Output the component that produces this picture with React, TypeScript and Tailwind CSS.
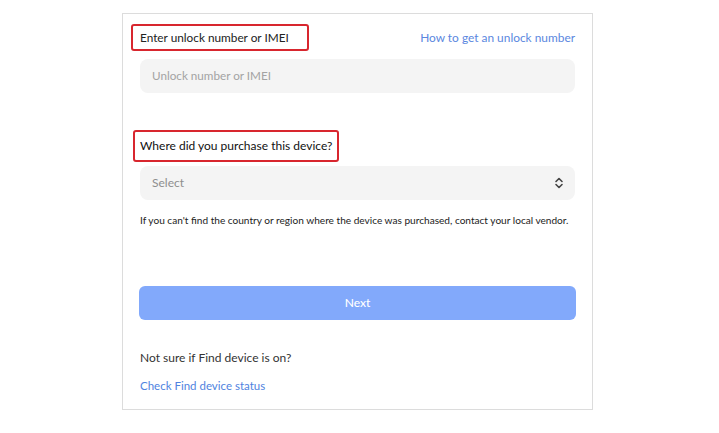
import React from "react";

const SelectIcon = () => (
  <svg width="10" height="12" viewBox="0 0 10 12" fill="none">
    <path d="M2 4.5L5 1.5L8 4.5" stroke="#444" strokeWidth="1.6" strokeLinecap="round" strokeLinejoin="round" />
    <path d="M2 7.5L5 10.5L8 7.5" stroke="#444" strokeWidth="1.6" strokeLinecap="round" strokeLinejoin="round" />
  </svg>
);

export default function App() {
  return (
    <div className="w-[719px] h-[433px] bg-white overflow-hidden whitespace-nowrap [font-family:Lato,'Noto_Sans',sans-serif]">
      <div className="ml-[122px] mt-[13px] w-[471px] h-[397px] border border-[#dcdcdc] flex flex-col">
        {/* unlock number */}
        <div className="mt-[10px] mx-[8px] flex items-center justify-between">
          <div className="h-[27px] w-[178px] border-2 border-[#d8262e] rounded-[3px] pl-[7px] flex items-center text-[11.8px] text-[#222]">
            Enter unlock number or IMEI
          </div>
          <a className="mr-[9px] text-[11.9px] text-[#5b87e0]">How to get an unlock number</a>
        </div>
        <div className="mt-[8px] mx-[17px] h-[34px] rounded-[8px] bg-[#f4f4f4] flex items-center pl-[12px] text-[11.7px] text-[#a3a3a3]">
          Unlock number or IMEI
        </div>

        {/* purchase place */}
        <div className="mt-[37px] ml-[10px] h-[32px] w-[206px] border-2 border-[#d8262e] rounded-[3px] pl-[5px] flex items-center text-[12px] text-[#111]">
          Where did you purchase this device?
        </div>
        <div className="mt-[4px] mx-[17px] h-[34px] rounded-[8px] bg-[#f4f4f4] flex items-center justify-between pl-[12px] pr-[11px] text-[12px] text-[#8e8e8e]">
          <span>Select</span>
          <SelectIcon />
        </div>
        <p className="mt-[13px] ml-[17px] text-[10.1px] leading-[14px] text-[#222]">
          If you can't find the country or region where the device was purchased, contact your local vendor.
        </p>

        <button className="mt-[59px] mx-[16px] h-[34px] rounded-[6px] bg-[#82a9fb] text-white text-[12px] font-medium">
          Next
        </button>

        <p className="mt-[30px] ml-[17px] text-[12px] leading-[16px] text-[#333]">Not sure if Find device is on?</p>
        <a className="mt-[12px] ml-[17px] text-[11.5px] leading-[16px] text-[#4f83e0]">Check Find device status</a>
      </div>
    </div>
  );
}
